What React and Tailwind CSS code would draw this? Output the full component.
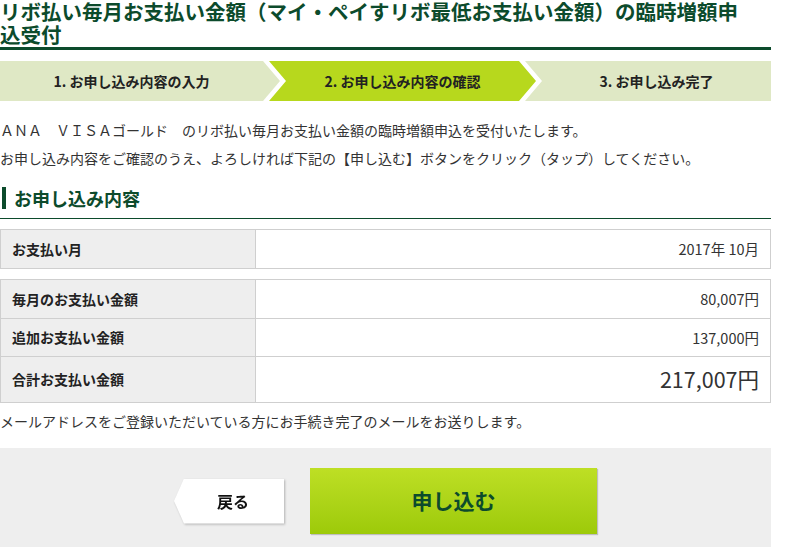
import React from 'react';

const steps = [
  { label: '1. お申し込み内容の入力', active: false },
  { label: '2. お申し込み内容の確認', active: true },
  { label: '3. お申し込み完了', active: false },
];

function StepBar() {
  return (
    <div className="mt-[11px] flex h-[40px]">
      {/* Step 1: flat left, chevron right */}
      <div className="flex w-[280px] items-center justify-center pr-[17px] bg-[#dfe8c5] [clip-path:polygon(0_0,calc(100%_-_17px)_0,100%_50%,calc(100%_-_17px)_100%,0_100%)]">
        <span className="text-[14px] font-bold text-[#222]">{steps[0].label}</span>
      </div>
      {/* Step 2: notched both sides */}
      <div className="ml-[-11px] flex w-[267px] items-center justify-center pl-[17px] pr-[17px] bg-[#b7d81d] [clip-path:polygon(0_0,calc(100%_-_17px)_0,100%_50%,calc(100%_-_17px)_100%,0_100%,17px_50%)]">
        <span className="text-[14px] font-bold text-[#222]">{steps[1].label}</span>
      </div>
      {/* Step 3: notch left, flat right */}
      <div className="ml-[-11px] flex flex-1 items-center justify-center pl-[17px] bg-[#dfe8c5] [clip-path:polygon(0_0,100%_0,100%_100%,0_100%,17px_50%)]">
        <span className="text-[14px] font-bold text-[#222]">{steps[2].label}</span>
      </div>
    </div>
  );
}

function Row({ label, value, big, first }) {
  return (
    <div className={`flex ${first ? '' : 'border-t border-[#cfcfcf]'} ${big ? 'h-[46px]' : 'h-[38px]'}`}>
      <div className="flex w-[255px] items-center border-r border-[#cfcfcf] bg-[#eeeeee] pl-[11px] text-[14px] font-bold text-[#222]">
        {label}
      </div>
      <div className={`flex flex-1 items-center justify-end pr-[11px] text-[#333] ${big ? 'text-[21.5px]' : 'text-[14.5px]'}`}>
        {value}
      </div>
    </div>
  );
}

export default function App() {
  return (
    <div className="w-[771px] bg-white font-['Noto_Sans_CJK_JP','Noto_Sans',sans-serif] text-[#333]">
      {/* Page title — the original wraps right after 申 */}
      <h1 className="border-b-[3px] border-[#0c4b2c] pb-[1px] text-[20.5px] font-bold leading-[23px] text-[#0c4b2c]">
        リボ払い毎月お支払い金額（マイ・ペイすリボ最低お支払い金額）の臨時増額申
        <br />
        込受付
      </h1>

      <StepBar />

      <p className="mt-[19px] text-[14px] leading-[20px]">
        ＡＮＡ　ＶＩＳＡゴールド　のリボ払い毎月お支払い金額の臨時増額申込を受付いたします。
      </p>
      <p className="mt-[8px] text-[14px] leading-[20px]">
        お申し込み内容をご確認のうえ、よろしければ下記の【申し込む】ボタンをクリック（タップ）してください。
      </p>

      {/* Section heading */}
      <div className="mt-[19px] border-b border-[#0c4b2c] pb-[9px]">
        <div className="flex h-[22px] items-center">
          <span className="ml-[2px] h-[22px] w-[4px] bg-[#0c4b2c]" />
          <h2 className="ml-[8px] text-[18px] font-bold leading-[22px] text-[#0c4b2c]">お申し込み内容</h2>
        </div>
      </div>

      <div className="mt-[10px] border border-[#cfcfcf]">
        <Row first label="お支払い月" value="2017年 10月" />
      </div>

      <div className="mt-[10px] border border-[#cfcfcf]">
        <Row first label="毎月のお支払い金額" value="80,007円" />
        <Row label="追加お支払い金額" value="137,000円" />
        <Row big label="合計お支払い金額" value="217,007円" />
      </div>

      <p className="mt-[8px] text-[14px] leading-[20px]">
        メールアドレスをご登録いただいている方にお手続き完了のメールをお送りします。
      </p>

      {/* Action area */}
      <div className="mt-[17px] flex items-center justify-center gap-[26px] bg-[#eeeeee] pb-[14px] pt-[20px]">
        <div className="drop-shadow-[1px_1px_1px_rgba(0,0,0,0.25)]">
          <button
            type="button"
            className="flex h-[45px] w-[110px] items-center justify-center pl-[8px] bg-white text-[16px] font-bold text-[#111] [clip-path:polygon(10px_0,100%_0,100%_100%,10px_100%,0_50%)]"
          >
            戻る
          </button>
        </div>
        <button
          type="button"
          className="flex h-[66px] w-[287px] items-center justify-center bg-gradient-to-b from-[#bedf24] to-[#9dca08] text-[21px] font-bold text-[#0c4b2c] shadow-[1px_1px_1px_rgba(0,0,0,0.2)]"
        >
          申し込む
        </button>
      </div>
    </div>
  );
}
